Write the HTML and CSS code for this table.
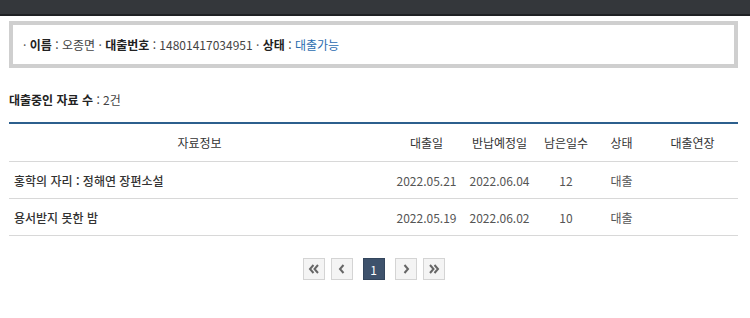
FILE: index.html
```html
<!DOCTYPE html>
<html lang="ko">
<head>
<meta charset="utf-8">
<link rel="stylesheet" href="styles.css">
</head>
<body>
<div class="topbar"></div>
<div class="wrap">
  <div class="userbox">
    <span class="dot">·</span> <b>이름</b> : 오종면 <span class="dot">·</span> <b>대출번호</b> : 14801417034951 <span class="dot">·</span> <b>상태</b> : <span class="ok">대출가능</span>
  </div>
  <p class="count"><b>대출중인 자료 수</b> : 2건</p>
  <table class="loans">
    <colgroup>
      <col class="c-title"><col class="c-date"><col class="c-date"><col class="c-days"><col class="c-state"><col class="c-ext">
    </colgroup>
    <thead>
      <tr><th>자료정보</th><th>대출일</th><th>반납예정일</th><th>남은일수</th><th>상태</th><th>대출연장</th></tr>
    </thead>
    <tbody>
      <tr><td class="title">홍학의 자리 : 정해연 장편소설</td><td>2022.05.21</td><td>2022.06.04</td><td>12</td><td>대출</td><td></td></tr>
      <tr><td class="title">용서받지 못한 밤</td><td>2022.05.19</td><td>2022.06.02</td><td>10</td><td>대출</td><td></td></tr>
    </tbody>
  </table>
  <nav class="pager">
    <a class="pbtn" href="#"><svg width="12" height="10" viewBox="0 0 12 10"><path d="M5.5 1 L2 5 L5.5 9 M10 1 L6.5 5 L10 9" fill="none" stroke="#666" stroke-width="2"/></svg></a>
    <a class="pbtn" href="#"><svg width="8" height="10" viewBox="0 0 8 10"><path d="M5.5 1 L2 5 L5.5 9" fill="none" stroke="#666" stroke-width="2"/></svg></a>
    <a class="pbtn cur" href="#">1</a>
    <a class="pbtn" href="#"><svg width="8" height="10" viewBox="0 0 8 10"><path d="M2.5 1 L6 5 L2.5 9" fill="none" stroke="#666" stroke-width="2"/></svg></a>
    <a class="pbtn" href="#"><svg width="12" height="10" viewBox="0 0 12 10"><path d="M2 1 L5.5 5 L2 9 M6.5 1 L10 5 L6.5 9" fill="none" stroke="#666" stroke-width="2"/></svg></a>
  </nav>
</div>
</body>
</html>
```
FILE: styles.css
```css
html, body { margin: 0; padding: 0; background: #fff; }
body { font-family: "Noto Sans CJK KR", "Noto Sans", sans-serif; font-size: 12px; color: #444; }
.topbar { height: 14px; background: #34373b; border-bottom: 2px solid #1f2124; }
.wrap { width: 729px; margin: 0 0 0 9px; }
.userbox { margin-top: 5px; height: 39px; line-height: 39px; border: 4px solid #cfcfcf; padding: 0 0 0 10px; color: #444; white-space: nowrap; }
.userbox b { color: #222; font-weight: 700; }
.userbox .dot { color: #555; }
.userbox .ok { color: #2b6cb0; }
.count { margin: 24px 0 0; height: 16px; line-height: 16px; color: #444; }
.count b { color: #222; }
.loans { margin-top: 14px; width: 100%; border-collapse: collapse; table-layout: fixed; border-top: 2px solid #2c5f8d; }
.c-title { width: 381px; }
.c-date { width: 73px; }
.c-days { width: 60px; }
.c-state { width: 51px; }
.c-ext { width: 91px; }
.loans th, .loans td { height: 36px; border-bottom: 1px solid #d8d8d8; padding: 0; text-align: center; font-weight: 400; white-space: nowrap; }
.loans th { height: 37px; color: #333; }
.loans td { color: #555; }
.loans td.title { text-align: left; padding-left: 5px; color: #333; font-weight: 500; }
.pager { margin-top: 22px; display: flex; justify-content: center; gap: 6px; }
.pbtn { width: 20px; height: 20px; border: 1px solid #d4d4d4; background: #f4f4f4; display: flex; align-items: center; justify-content: center; text-decoration: none; color: #fff; font-size: 12px; }
.pbtn.cur { background: #3e526c; border-color: #33455c; margin: 0 4px; }
```
